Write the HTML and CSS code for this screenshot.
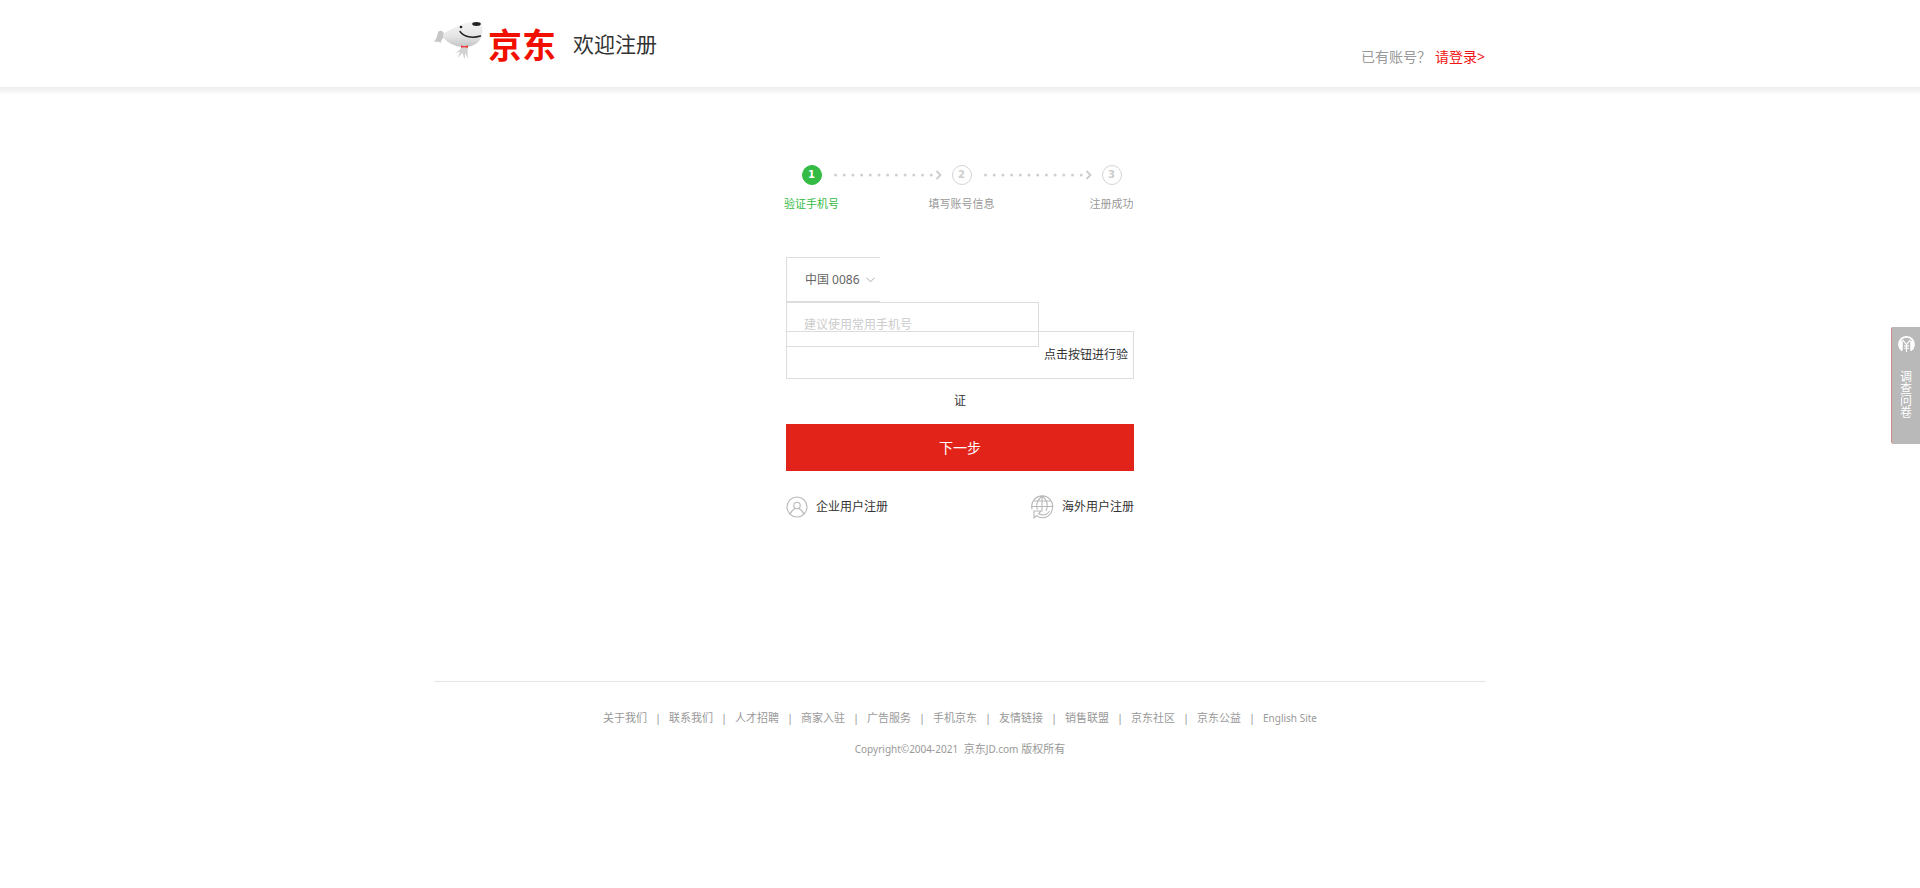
FILE: index.html
```html
<!DOCTYPE html>
<html lang="zh-CN">
<head>
<meta charset="utf-8">
<title>欢迎注册</title>
<link rel="stylesheet" href="styles.css">
</head>
<body>
<header class="header">
  <div class="wrap header-inner">
    <a class="logo" href="#">
      <svg class="logo-dog" viewBox="0 0 50 48" aria-hidden="true">
        <defs>
          <linearGradient id="fur" x1="0" y1="0" x2="0" y2="1">
            <stop offset="0" stop-color="#f4f4f4"/>
            <stop offset=".55" stop-color="#e6e6e6"/>
            <stop offset="1" stop-color="#c4c4c4"/>
          </linearGradient>
        </defs>
        <path d="M11 15C9 11 7 10 4.500 11.500 3 14 4 17 0 21.500c3 .8 5-.5 6.500 1.500C7.500 20 8 18 11 17z" fill="#c6c6c6"/>
        <path d="M9 14c6-3 11-7 20-10 4-1.500 7-2 11-2 6 0 8.500 2 8.500 7 0 11-5 17-17 18C21 27.500 12 22 9 17z" fill="url(#fur)"/>
        <path d="M27 27l7 0c-.5 4 0 7-.5 12l-2-6-1 6.500-2-6.500-5 5 2.500-6-5.500 1c4-2 6-3 6.500-6z" fill="#d2d2d2"/>
        <path d="M27 25.500l3 .8 4-.8v2.200l-4-.5-3 .5z" fill="#e33"/>
        <circle cx="27" cy="7" r="1.300" fill="#222"/>
        <ellipse cx="42.500" cy="4" rx="4.300" ry="1.900" fill="#222"/>
        <path d="M26 11.500c4 5.500 12 7 20.500 4.500" fill="none" stroke="#222" stroke-width="1.400" stroke-linecap="round"/>
      </svg>
      <span class="logo-name">京东</span>
    </a>
    <h1 class="title">欢迎注册</h1>
    <p class="have">已有账号？<a href="#">请登录&gt;</a></p>
  </div>
</header>

<main class="main">
  <div class="steps">
    <div class="step-marks">
      <span class="mark mark-on">1</span>
      <svg class="dots" viewBox="0 0 108 10" aria-hidden="true">
        <path d="M1.500 5H98" stroke="#d0d0d0" stroke-width="3" stroke-linecap="round" stroke-dasharray="0 8.700"/>
        <path d="M102.500 1L106.500 5l-4 4" fill="none" stroke="#ccc" stroke-width="1.800"/>
      </svg>
      <span class="mark">2</span>
      <svg class="dots" viewBox="0 0 108 10" aria-hidden="true">
        <path d="M1.500 5H98" stroke="#d0d0d0" stroke-width="3" stroke-linecap="round" stroke-dasharray="0 8.700"/>
        <path d="M102.500 1L106.500 5l-4 4" fill="none" stroke="#ccc" stroke-width="1.800"/>
      </svg>
      <span class="mark">3</span>
    </div>
    <ol class="step-names">
      <li class="on">验证手机号</li>
      <li>填写账号信息</li>
      <li>注册成功</li>
    </ol>
  </div>

  <form class="form">
    <div class="country">
      <select class="country-select" aria-label="国家">
        <option>中国 0086</option>
      </select>
      <svg class="chevron" viewBox="0 0 9 6" aria-hidden="true"><path d="M.5 .8l4 4 4-4" fill="none" stroke="#aaa"/></svg>
    </div>
    <input class="phone" type="tel" placeholder="建议使用常用手机号" aria-label="手机号">
    <div class="verify">
      <span class="verify-a">点击按钮进行验</span>
      <span class="verify-b">证</span>
    </div>
    <button class="next" type="button">下一步</button>
    <div class="others">
      <a href="#">
        <svg class="ico" viewBox="0 0 22 22" fill="none" stroke="#b8b8b8" stroke-width="1.100" aria-hidden="true">
          <circle cx="11" cy="11" r="10"/><circle cx="11" cy="9.500" r="3.200"/>
          <path d="M4 18c1.500-3.500 3.300-4.500 5.200-5.700M18 18c-1.500-3.500-3.300-4.500-5.200-5.700"/>
        </svg>
        企业用户注册
      </a>
      <a href="#">
        <svg class="globe" viewBox="0 0 24 24" fill="none" stroke="#b8b8b8" stroke-width="1.100" aria-hidden="true">
          <path d="M2.200 14.500A10.500 10.500 0 1 1 22.500 13.500M1 11.500H23M3.500 6H20.500M12 1V16.500M7.500 14.500C5.500 10 7.500 4.500 12 1c4.500 3.500 6.500 9 4 15"/>
          <path d="M22.500 13.500C21 22 13 25 6.500 20.800L4 23V16h7L8.500 18.800c4.500 2.200 8.500 1 11-2.800"/>
        </svg>
        海外用户注册
      </a>
    </div>
  </form>
</main>

<footer class="wrap footer">
  <nav class="links">
    <a href="#">关于我们</a><i>|</i><a href="#">联系我们</a><i>|</i><a href="#">人才招聘</a><i>|</i><a href="#">商家入驻</a><i>|</i><a href="#">广告服务</a><i>|</i><a href="#">手机京东</a><i>|</i><a href="#">友情链接</a><i>|</i><a href="#">销售联盟</a><i>|</i><a href="#">京东社区</a><i>|</i><a href="#">京东公益</a><i>|</i><a class="en" href="#">English Site</a>
  </nav>
  <p class="copy"><span class="en">Copyright©2004-2021</span>&nbsp; 京东<span class="en">JD.com</span> 版权所有</p>
</footer>

<a class="survey" href="#">
  <svg class="survey-ico" viewBox="0 0 18 18" aria-hidden="true">
    <path d="M4.500 15.500A8 8 0 1 1 13.500 15.500" fill="none" stroke="#fff" stroke-width="1.800"/>
    <path d="M2 5h3v10.500L2 12zM16 5h-3v10.500L16 12z" fill="#fff"/>
    <path d="M5 4l4 5 4-5M9 9V17M6.500 10.500h5M6.500 13h5" fill="none" stroke="#fff" stroke-width="1.200"/>
  </svg>
  <span class="survey-text">调查问卷</span>
</a>
</body>
</html>
```
FILE: styles.css
```css
* { box-sizing: border-box; }
body {
  margin: 0;
  background: #fff;
  color: #333;
  font: 12px/18px "Noto Sans", "Noto Sans CJK SC", sans-serif;
}
a { color: inherit; text-decoration: none; }
p, h1, ol { margin: 0; padding: 0; }

.wrap { max-width: 1052px; margin: 0 auto; }

.header { padding-bottom: 8px; background: linear-gradient(#ededed, #fff) bottom / 100% 8px no-repeat; }
.header-inner { display: flex; height: 87px; align-items: center; padding-right: 1px; }
.logo { display: flex; align-items: center; gap: 4px; }
.logo-dog { width: 50px; height: 48px; }
.logo-name {
  color: #f10f00;
  font-family: "Noto Sans CJK SC", sans-serif;
  font-size: 34px;
  font-weight: 700;
  line-height: 40px;
}
.title { margin-left: 17px; font-size: 21px; font-weight: 400; line-height: 28px; }
.have { margin: 26px 0 0 auto; color: #999; font-size: 14px; line-height: 20px; }
.have a { margin-left: 4px; color: #f01414; }

.main { width: 348px; margin: 0 auto; padding-top: 70px; }

.steps { padding-left: 3px; }
.step-marks { display: flex; justify-content: center; align-items: center; }
.mark {
  flex: none;
  width: 20px;
  height: 20px;
  border: 1px solid #d4d4d4;
  border-radius: 50%;
  color: #ccc;
  font: bold 10px/18px "DejaVu Sans", sans-serif;
  text-align: center;
}
.mark-on { border-color: #33bb44; background: #33bb44; color: #fff; }
.dots { flex: none; width: 108px; height: 10px; margin: 0 10px 0 12px; }
.step-names {
  display: grid;
  grid-template-columns: repeat(3, 150px);
  justify-content: center;
  margin-top: 11px;
  list-style: none;
  color: #999;
  font-size: 11px;
  line-height: 16px;
  text-align: center;
}
.step-names .on { color: #33bb44; }

.form { margin-top: 45px; }
.country {
  display: flex;
  align-items: center;
  width: 94px;
  height: 45px;
  padding-left: 18px;
  border: 1px solid #ddd;
  border-right: 0;
}
.country-select {
  appearance: none;
  width: 61px;
  padding: 0;
  border: 0;
  background: none;
  color: #666;
  font: inherit;
}
.chevron { width: 9px; height: 6px; }
.phone {
  display: block;
  width: 253px;
  height: 45px;
  padding: 0 17px;
  border: 1px solid #ddd;
  background: none;
  color: #333;
  font: inherit;
}
.phone::placeholder { color: #ccc; opacity: 1; }
.verify {
  height: 48px;
  margin-top: -16px;
  border: 1px solid #ddd;
}
.verify span { display: block; line-height: 46px; }
.verify-a { padding-right: 5px; text-align: right; }
.verify-b { text-align: center; }
.next {
  display: block;
  width: 100%;
  height: 47px;
  margin-top: 45px;
  padding: 0;
  border: 0;
  background: #e22319;
  color: #fff;
  font: inherit;
  font-size: 14px;
}
.others { display: flex; justify-content: space-between; margin-top: 24px; }
.others a { display: flex; align-items: center; gap: 8px; }
.ico { width: 22px; height: 22px; }
.globe { width: 24px; height: 24px; }

.footer {
  margin-top: 162px;
  padding-top: 28px;
  border-top: 1px solid #e5e5e5;
  color: #999;
  font-size: 11px;
  line-height: 16px;
}
.links { display: flex; justify-content: center; }
.links i { width: 22px; font-style: normal; text-align: center; }
.en { font-size: 10px; }
.copy { margin-top: 15px; text-align: center; }

.survey {
  position: fixed;
  top: 327px;
  right: 0;
  display: flex;
  flex-direction: column;
  align-items: center;
  gap: 18px;
  width: 29px;
  height: 117px;
  padding-top: 9px;
  border-left: 1px solid #d08a8a;
  border-radius: 2px 0 0 3px;
  background: #b9b9b9;
  color: #fff;
}
.survey-ico { width: 17px; height: 17px; }
.survey-text { width: 12px; font-size: 12px; line-height: 12px; }
```
